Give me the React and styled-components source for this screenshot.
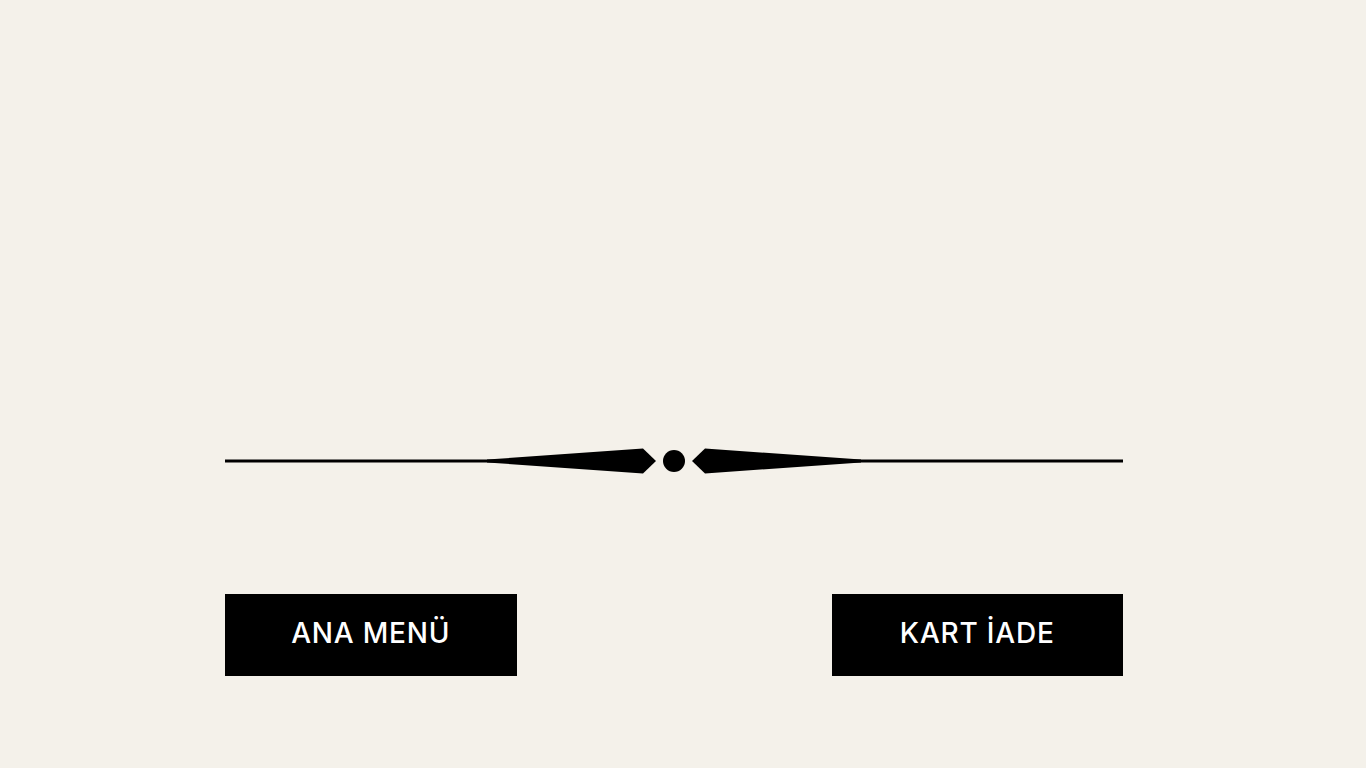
import React from 'react'
import styled, { createGlobalStyle } from 'styled-components'

const GlobalStyle = createGlobalStyle`
  html, body {
    margin: 0;
    padding: 0;
    background: #f4f1ea;
  }
  body {
    font-family: Inter, "Liberation Sans", sans-serif;
  }
`

const Screen = styled.div`
  width: 1366px;
  height: 768px;
  box-sizing: border-box;
  padding: 448px 0 0 225px;
  background: #f4f1ea;
`

const Column = styled.div`
  width: 898px;
  display: flex;
  flex-direction: column;
`

const Divider = styled.svg`
  display: block;
  width: 898px;
  height: 26px;
`

const ButtonRow = styled.div`
  display: flex;
  justify-content: space-between;
  margin-top: 120px;
`

const Button = styled.button`
  width: 291.5px;
  height: 81.5px;
  border: none;
  border-radius: 0;
  background: #000;
  color: #fff;
  font-family: Inter, "Liberation Sans", sans-serif;
  font-size: 28px;
  font-weight: 550;
  letter-spacing: 0.8px;
  padding: 0 0 4px;
  cursor: pointer;
`

function Ornament() {
  return (
    <Divider viewBox="0 0 898 26">
      <rect x="0" y="11.5" width="270" height="3" fill="#000" />
      <rect x="628" y="11.5" width="270" height="3" fill="#000" />
      <polygon points="262,11.5 418,0.5 431,13 418,25.5 262,14.5" fill="#000" />
      <circle cx="449" cy="13" r="11" fill="#000" />
      <polygon points="636,11.5 480,0.5 467,13 480,25.5 636,14.5" fill="#000" />
    </Divider>
  )
}

export default function App() {
  return (
    <>
      <GlobalStyle />
      <Screen>
        <Column>
          <Ornament />
          <ButtonRow>
            <Button>ANA MENÜ</Button>
            <Button>KART İADE</Button>
          </ButtonRow>
        </Column>
      </Screen>
    </>
  )
}
